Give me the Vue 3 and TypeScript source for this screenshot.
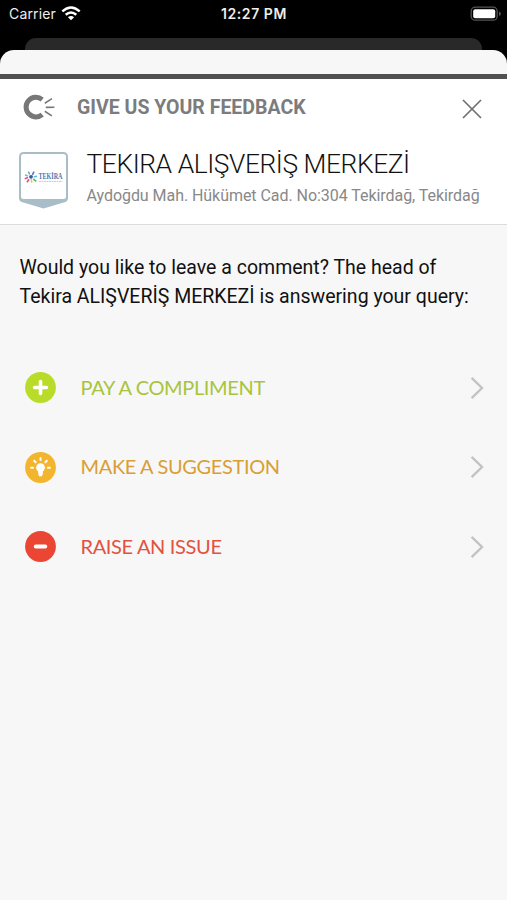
<script setup lang="ts">
type Kind = 'compliment' | 'suggestion' | 'issue'

interface Option {
  kind: Kind
  label: string
}

const options: Option[] = [
  { kind: 'compliment', label: 'PAY A COMPLIMENT' },
  { kind: 'suggestion', label: 'MAKE A SUGGESTION' },
  { kind: 'issue', label: 'RAISE AN ISSUE' },
]
</script>

<template>
  <div class="screen">
    <div class="status">
      <div class="carrier">
        <span>Carrier</span>
        <svg class="wifi" width="20" height="15" viewBox="0 0 20 15">
          <g fill="none" stroke="#fff" stroke-width="2.5">
            <path d="M1.3 5.4Q10 -2.4 18.7 5.4" />
            <path d="M4.7 8.8Q10 4.1 15.3 8.8" />
          </g>
          <path d="M6.9 11.2Q10 8.6 13.1 11.2L10 14.3Z" fill="#fff" />
        </svg>
      </div>
      <div class="clock">12:27 PM</div>
      <svg class="battery" width="32" height="16" viewBox="0 0 32 16">
        <rect x="1.2" y="1.2" width="26" height="13" rx="4" fill="none" stroke="#555" stroke-width="1.3" />
        <rect x="3.2" y="3.2" width="22" height="9" rx="2" fill="#fff" />
        <path d="M29 5.4Q31 6.3 31 7.7T29 10Z" fill="#555" />
      </svg>
    </div>
    <div class="behind"></div>
    <main class="sheet">
      <div class="grip"></div>
      <header class="head">
        <div class="bar">
          <svg class="brand" width="34" height="28" viewBox="0 0 34 28">
            <path d="M20.2 6.6A9.8 9.8 0 1 0 20.2 21.6" fill="none" stroke="#777" stroke-width="5" />
            <g fill="#777">
              <path d="M22.4 9.5L29.6 4.9L30.3 6.2L23.2 10.9Z" />
              <path d="M23.8 13.4L32.4 13.6V14.9L23.8 15.3Z" />
              <path d="M23.2 17.6L30.3 22.2L29.4 23.5L22.4 19.1Z" />
            </g>
          </svg>
          <h1 class="title">GIVE US YOUR FEEDBACK</h1>
          <svg class="close" width="20" height="20" viewBox="0 0 20 20">
            <path d="M1 1L19 19M19 1L1 19" stroke="#707070" stroke-width="1.7" />
          </svg>
        </div>
        <div class="venue">
          <svg class="badge" width="50" height="57" viewBox="0 0 50 57">
            <path d="M5 0H44Q49 0 49 5V46Q49 49.5 45.5 50.3L24.5 56.6L3.5 50.3Q0 49.5 0 46V5Q0 0 5 0Z" fill="#a9bdc9" />
            <rect x="2" y="2" width="45" height="45" rx="2.5" fill="#fff" />
            <g fill="none" stroke-width="1.6" stroke-linecap="round">
              <path d="M9.6 20.2L10.4 21.9" stroke="#6fa8cf" />
              <path d="M14.8 20.2L13.6 22.3" stroke="#5a78b5" />
              <path d="M6.6 23L8.4 23.9" stroke="#7cc07f" />
              <path d="M6.4 26.6L8.4 25.8" stroke="#df4c9b" />
              <path d="M8.3 29.7L9.7 27.8" stroke="#e34778" />
              <path d="M12.8 30L12.3 27.9" stroke="#e3cd48" />
              <path d="M16.8 29L14.8 27.3" stroke="#55ad75" />
              <path d="M17.4 24.4L15.4 24.8" stroke="#65bbdd" />
            </g>
            <circle cx="12" cy="24.8" r="1.9" fill="#345c9e" />
            <text class="wordmark" x="19.5" y="27.3" textLength="24" lengthAdjust="spacingAndGlyphs">TEKİRA</text>
            <path d="M20 29.4H43.5" stroke="#b4c6da" stroke-width="0.9" stroke-dasharray="2 0.5" />
          </svg>
          <div class="details">
            <h2 class="name">TEKIRA ALIŞVERİŞ MERKEZİ</h2>
            <p class="address">Aydoğdu Mah. Hükümet Cad. No:304 Tekirdağ, Tekirdağ</p>
          </div>
        </div>
      </header>
      <p class="question">
        Would you like to leave a comment? The head of<br />
        Tekira ALIŞVERİŞ MERKEZİ is answering your query:
      </p>
      <nav class="options">
        <div v-for="o in options" :key="o.kind" class="option" :class="o.kind">
          <svg class="icon" width="31" height="31" viewBox="0 0 31 31">
            <circle cx="15.5" cy="15.5" r="15.4" fill="currentColor" />
            <path v-if="o.kind === 'compliment'" d="M15.5 9.6V21.4M9.6 15.5H21.4" stroke="#fff" stroke-width="3.6" stroke-linecap="round" />
            <g v-else-if="o.kind === 'suggestion'">
              <g fill="#fff">
                <circle cx="15.5" cy="15.6" r="4.4" />
                <path d="M13.2 18H17.8V22L16.9 24.2H14.1L13.2 22Z" />
              </g>
              <path d="M15.5 6V8M9.2 8.8L10.6 10.2M21.8 8.8L20.4 10.2M6.1 15.8H8.1M24.9 15.8H22.9" stroke="#fff" stroke-width="2" stroke-linecap="round" />
            </g>
            <path v-else d="M10.7 15.5H20.3" stroke="#fff" stroke-width="3.8" stroke-linecap="round" />
          </svg>
          <span class="label">{{ o.label }}</span>
          <svg class="chevron" width="14" height="24" viewBox="0 0 14 24">
            <path d="M1.6 1.8L12 12L1.6 22.2" fill="none" stroke="#c3c3c3" stroke-width="2.4" />
          </svg>
        </div>
      </nav>
    </main>
  </div>
</template>

<style>
body {
  margin: 0;
  background: #000;
}
</style>

<style scoped>
.screen {
  display: flex;
  flex-direction: column;
  height: 900px;
  overflow: hidden;
  background: #000;
  font-family: Roboto, sans-serif;
}
.status {
  display: grid;
  grid-template-columns: 1fr auto 1fr;
  align-items: center;
  height: 27px;
  padding: 0 5px 0 9px;
  margin-bottom: 11px;
  color: #eee;
  font: 14px/27px Inter, sans-serif;
}
.carrier {
  display: flex;
  align-items: center;
  gap: 5px;
  letter-spacing: 0.15px;
}
.clock {
  margin-right: 3px;
  font-weight: 600;
  letter-spacing: 0.55px;
}
.battery {
  justify-self: end;
}
.behind {
  flex: none;
  height: 12px;
  margin: 0 25px;
  border-radius: 11px 11px 0 0;
  background: #292929;
}
.sheet {
  flex: 1;
  border-radius: 14px 14px 0 0;
  background: #f7f7f7;
  overflow: hidden;
}
.grip {
  height: 24px;
  border-bottom: 5px solid #515151;
}
.head {
  height: 145px;
  border-bottom: 1px solid #dcdcdc;
  background: #fff;
}
.bar {
  display: flex;
  align-items: center;
  height: 56px;
  padding: 0 25px 0 22px;
}
.brand {
  flex: none;
}
.title {
  flex: 1;
  margin: 0 0 0 21px;
  color: #7c7c7c;
  font-size: 19.5px;
  font-weight: 700;
}
.close {
  margin-top: 4px;
}
.venue {
  display: flex;
  padding: 17px 0 0 19px;
}
.badge {
  flex: none;
}
.wordmark {
  fill: #4a78ad;
  font: bold 7.5px "Liberation Serif", serif;
}
.details {
  margin-left: 17.5px;
  white-space: nowrap;
}
.name {
  margin: -4px 0 0;
  color: #111;
  font-size: 26.4px;
  font-weight: 300;
  line-height: 33px;
  letter-spacing: -0.43px;
}
.address {
  margin: 5px 0 0;
  color: #888;
  font-size: 16px;
  line-height: 20px;
  letter-spacing: -0.05px;
}
.question {
  margin: 28px 0 0 19.5px;
  color: #111;
  font-size: 19.5px;
  line-height: 29px;
  white-space: nowrap;
}
.options {
  margin-top: 37px;
}
.option {
  display: flex;
  align-items: center;
  height: 79.5px;
  padding: 0 23.5px 0 25px;
}
.icon {
  flex: none;
}
.label {
  flex: 1;
  margin: -2px 0 0 24.5px;
  font: 20px/24px Lato, sans-serif;
  letter-spacing: -0.35px;
}
.compliment {
  color: #b9dc2b;
}
.compliment .label {
  color: #a9c43c;
}
.suggestion {
  color: #f4b52e;
}
.suggestion .label {
  color: #d99e36;
}
.issue {
  color: #eb4634;
}
.issue .label {
  color: #e2523f;
}
</style>
